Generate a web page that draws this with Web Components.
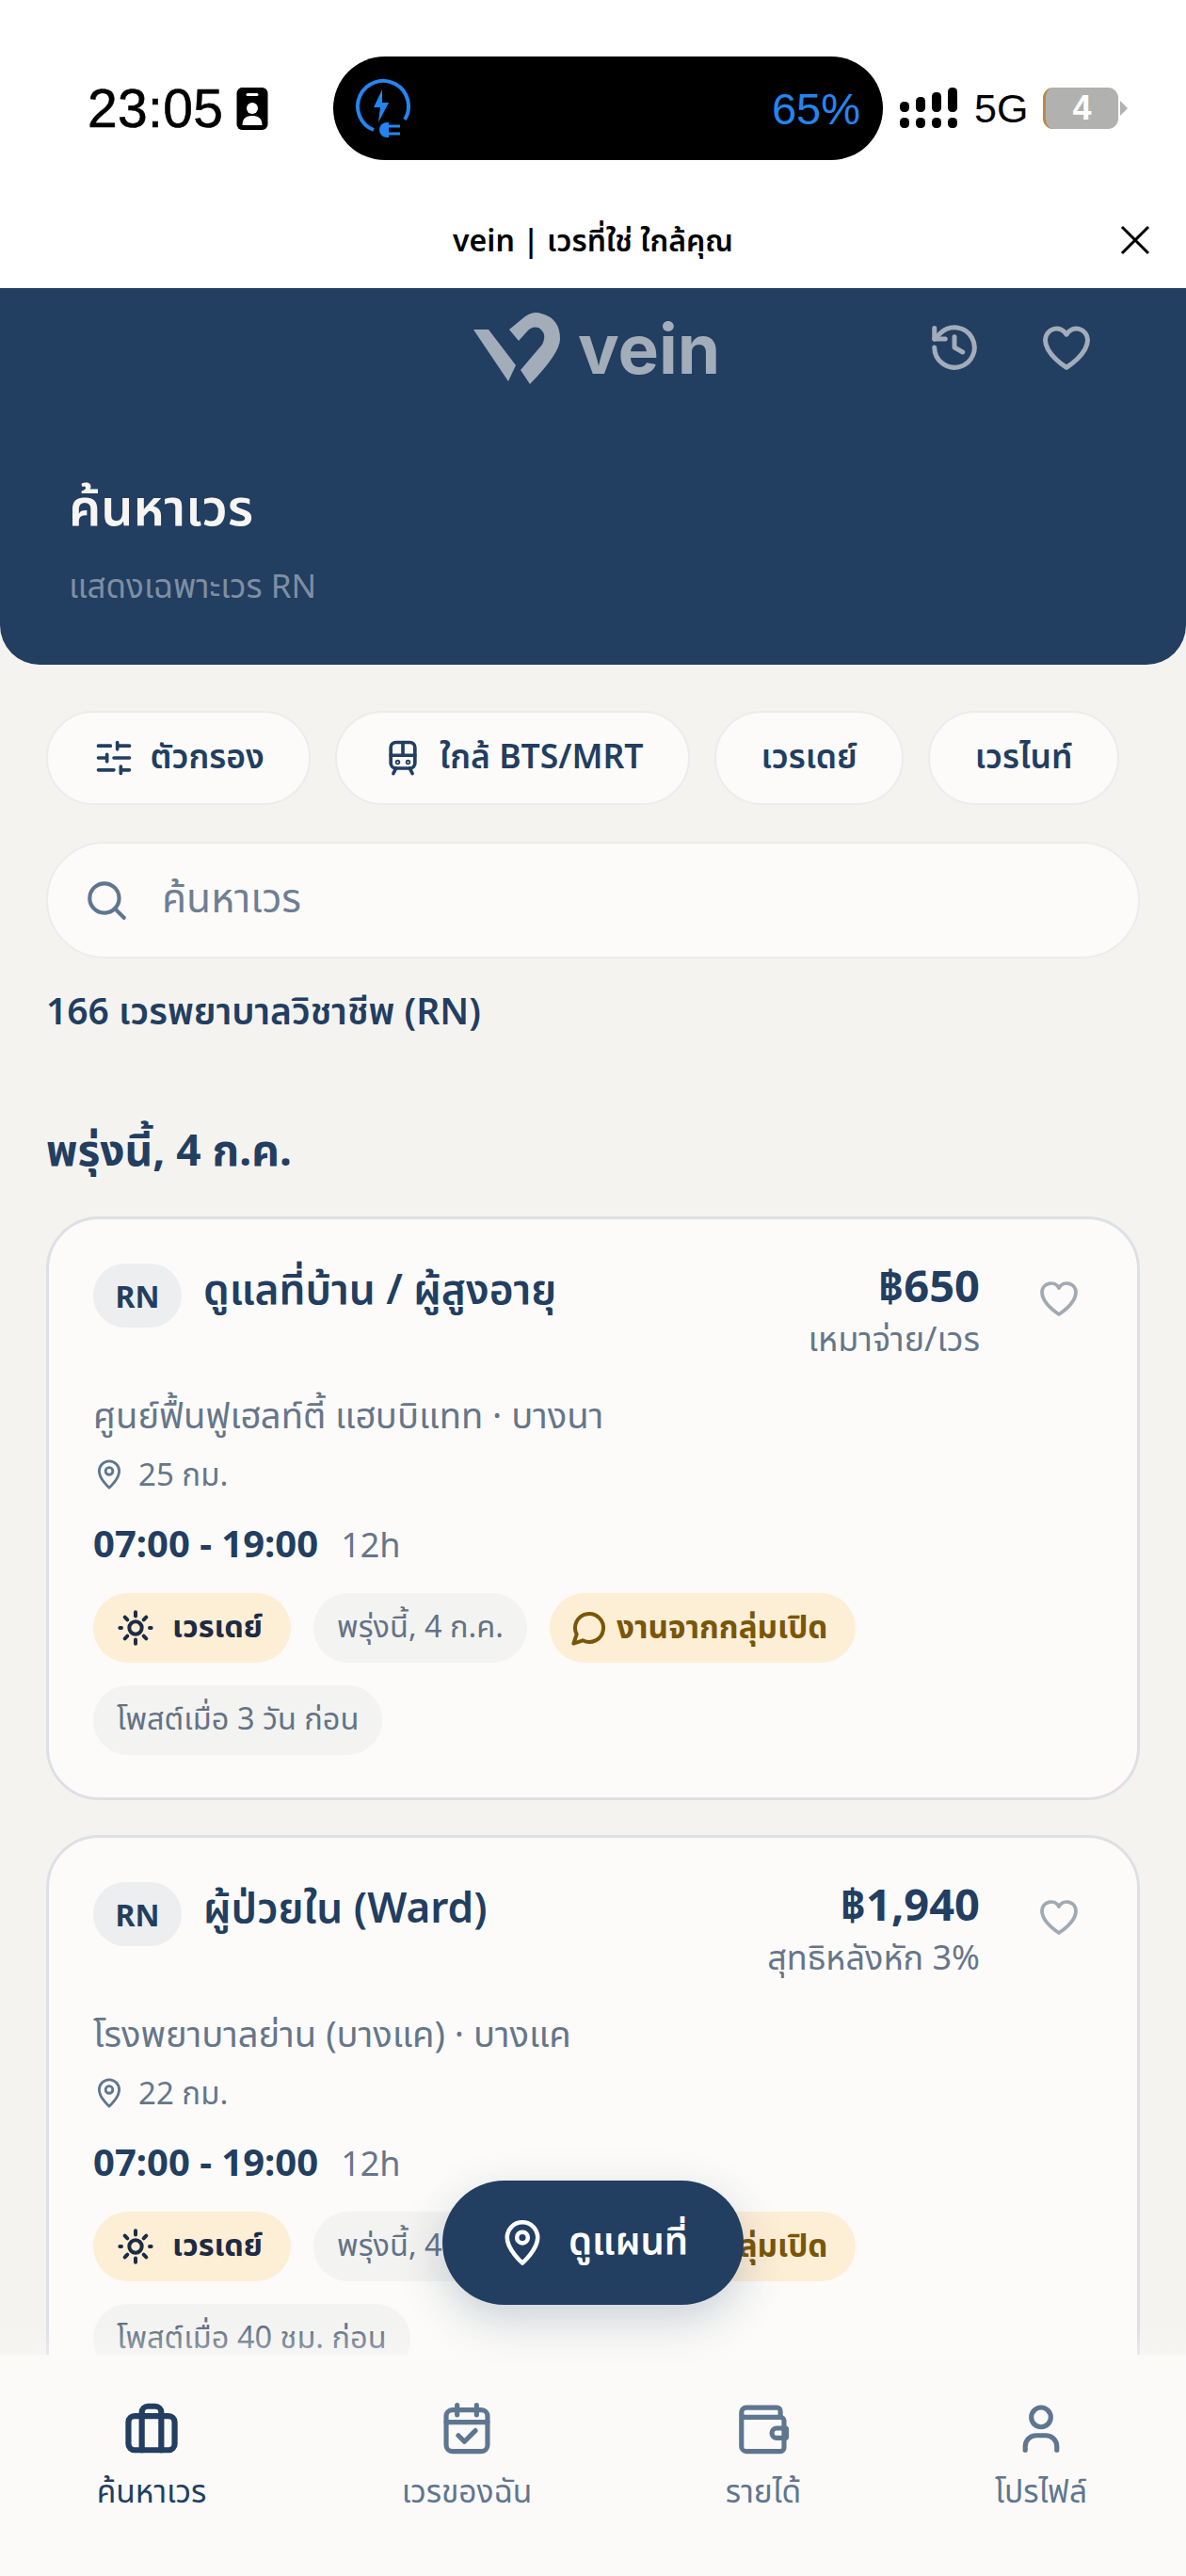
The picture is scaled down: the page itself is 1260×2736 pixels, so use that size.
<!DOCTYPE html>
<html lang="th"><head><meta charset="utf-8"><style>
html,body{margin:0;padding:0;background:#f4f3f0}
body{font-family:"Noto Sans","Noto Sans Thai","DejaVu Sans",sans-serif;width:1260px;height:2736px;overflow:hidden}
</style></head><body>
<vein-app></vein-app>
<script>
const I={
 heart:'<path d="M12 20.500S3 15 3 8.800A4.800 4.800 0 0 1 12 6.500 4.800 4.800 0 0 1 21 8.800C21 15 12 20.500 12 20.500Z"/>',
 history:'<path d="M3.500 12a8.500 8.500 0 1 0 2.600-6.100L3.500 8.400"/><path d="M3.500 3.800v4.600h4.600"/><path d="M12 7.500V12l3.500 2"/>',
 sliders:'<path d="M21 5h-7M10 5H3M21 12h-9M8 12H3M21 19h-5M12 19H3M14 3v4M8 10v4M16 17v4"/>',
 train:'<rect x="5" y="3" width="14" height="15" rx="3"/><path d="M5 10.500h14M12 3v7.500M8 18l-1.500 3M16 18l1.500 3"/><circle cx="9" cy="14.500" r=".5"/><circle cx="15" cy="14.500" r=".5"/>',
 search:'<circle cx="11" cy="11" r="7.500"/><path d="m16.500 16.500 4.500 4.500"/>',
 pin:'<path d="M12 22s7.500-6.600 7.500-12.500a7.500 7.500 0 0 0-15 0C4.500 15.400 12 22 12 22Z"/><circle cx="12" cy="9.500" r="2.700"/>',
 sun:'<circle cx="12" cy="12" r="4"/><path d="M12 2v2.500M12 19.500V22M2 12h1M21 12h1M5.200 5.200l1.600 1.600M17.200 17.200l1.600 1.600M5.200 18.800l1.600-1.600M17.200 6.800l1.600-1.600"/>',
 chat:'<path d="M7.900 20A9 9 0 1 0 4 16.100L2 22Z"/>',
 case:'<rect x="2.500" y="7" width="19" height="14" rx="2.500"/><path d="M8 21V5.500A2.500 2.500 0 0 1 10.500 3h3A2.500 2.500 0 0 1 16 5.500V21"/>',
 cal:'<rect x="3.500" y="4.500" width="17" height="17" rx="2.500"/><path d="M3.500 9.500h17M8 2.500v4M16 2.500v4M8.500 15l2.500 2.500 4.500-4.500"/>',
 wallet:'<path d="M19 7.500V5a1.500 1.500 0 0 0-1.500-1.500H5A2 2 0 0 0 3 5.500v14a2 2 0 0 0 2 2h14a1.500 1.500 0 0 0 1.500-1.500V9A1.500 1.500 0 0 0 19 7.500H4.500A1.500 1.500 0 0 1 3 6"/><path d="M21 12h-3.500a2 2 0 0 0 0 4H21a.5.5 0 0 0 .5-.5v-3a.5.5 0 0 0-.5-.5Z"/>',
 user:'<circle cx="12" cy="7.500" r="4"/><path d="M5.500 21v-1.500a4.500 4.500 0 0 1 4.500-4.500h4a4.500 4.500 0 0 1 4.500 4.500V21"/>'
};
function icon(n,s,w,c){return `<svg width="${s}" height="${s}" viewBox="0 0 24 24" fill="none" stroke="${c||'currentColor'}" stroke-width="${w}" stroke-linecap="round" stroke-linejoin="round" style="display:block;flex:none">${I[n]}</svg>`}
function def(name,css,html){customElements.define(name,class extends HTMLElement{
 connectedCallback(){if(this.shadowRoot)return;const r=this.attachShadow({mode:'open'});
 const a={};for(const x of this.attributes)a[x.name]=x.value;
 r.innerHTML=`<style>${css}</style>`+(typeof html==='function'?html(a):html)}})}

def('vein-status',`:host{display:flex;align-items:center;height:210px;box-sizing:border-box;background:#fff;color:#000;font-family:"Liberation Sans",sans-serif;padding:20px 0 0 93px;position:relative}
.time{font-size:57px;font-weight:400;-webkit-text-stroke:.6px #000;letter-spacing:.3px;width:158px;flex:none}
.badge{width:34px;height:45px;margin-right:69px;flex:none}
.island{width:584px;height:110px;background:#000;border-radius:55px;flex:none;display:flex;align-items:center;justify-content:space-between;box-sizing:border-box;padding:0 24px 0 19px;color:#2386f0;font-size:47px}
.sig{margin:0 0 0 18px;flex:none}
.g{font-size:43px;margin:0 0 0 17px;width:73px;flex:none}
.bat{flex:none;position:relative;width:90px;height:44px;display:flex}
.cell{width:80px;height:44px;border-radius:11px;background:#b1b2b0;border-left:3px solid #b98a4d;box-sizing:border-box;color:#fff;font-weight:700;font-size:36px;text-align:center;line-height:44px}
.tip{width:0;height:0;border-left:8px solid #b1b2b0;border-top:8px solid transparent;border-bottom:8px solid transparent;margin:14px 0 0 2px}
`,`<span class="time">23:05</span>
<svg class="badge" viewBox="0 0 33 45"><rect width="33" height="45" rx="6" fill="#000"/><rect x="10" y="6" width="13" height="3" rx="1.500" fill="#fff"/><circle cx="16.500" cy="22" r="6" fill="#fff"/><path d="M6 40c0-8 5-10 10.500-10S27 32 27 40Z" fill="#fff"/></svg>
<div class="island">
<svg width="64" height="64" viewBox="0 0 64 64"><path d="M57 44A27 27 0 1 0 24 55" fill="none" stroke="#2386f0" stroke-width="4"/><path d="M33 12 24 31h7l-2 16 11-21h-7Z" fill="#2386f0"/><path d="M40 47v16h-2a8 8 0 0 1 0-16Z" fill="#2386f0"/><path d="M40 51h12M40 59h12" stroke="#2386f0" stroke-width="3"/></svg>
<span>65%</span></div>
<svg class="sig" width="62" height="44" viewBox="0 0 62 44"><g fill="#000"><rect x="0" y="15" width="10" height="11" rx="4.500"/><rect x="0" y="32" width="10" height="11" rx="4.500"/><rect x="17" y="10" width="10" height="16" rx="4.500"/><rect x="17" y="32" width="10" height="11" rx="4.500"/><rect x="34" y="5" width="10" height="21" rx="4.500"/><rect x="34" y="32" width="10" height="11" rx="4.500"/><rect x="51" y="0" width="10" height="26" rx="4.500"/><rect x="51" y="32" width="10" height="11" rx="4.500"/></g></svg>
<span class="g">5G</span>
<div class="bat"><div class="cell">4</div><div class="tip"></div></div>`);

def('vein-title',`:host{display:block;position:relative;height:96px;background:#fff;color:#000}
.t{position:absolute;left:0;right:0;top:20px;text-align:center;font-weight:600;font-size:32px;line-height:50px}
svg{position:absolute;left:1189px;top:28px}`,`<div class="t">vein | เวรที่ใช่ ใกล้คุณ</div><svg width="34" height="34" viewBox="0 0 34 34"><path d="M3 3l28 28M31 3 3 31" stroke="#000" stroke-width="3"/></svg>`);

def('vein-hero',`:host{display:block;height:400px;background:#223e61;border-radius:0 0 42px 42px;box-sizing:border-box;padding:0 49px 0 73px;color:#fff}
.top{height:126px;position:relative}
.logo{position:absolute;left:427px;top:24px;display:flex;align-items:flex-start}
.word{color:#a2adb9;font-weight:700;font-size:73px;line-height:80px;margin:1px 0 0 14px;font-family:Inter,sans-serif}
.ic{position:absolute;top:33px}
h1{margin:75px 0 0;font-size:54px;font-weight:600;line-height:60px;color:#f6f5f1}
p{margin:32px 0 0;font-size:35px;line-height:46px;color:#7f8ea1}`,
`<div class="top">
<div class="logo"><svg width="100" height="80" viewBox="0 0 100 80"><path d="M3 20H19L48 58 40 75Z" fill="#a2adb9"/><path d="M41 20 58 6Q67 0 75 3 95 8 95 30 95 45 63 78L53 63 76 36Q82 24 72 18 65 16 60 22L51 32Z" fill="#a2adb9"/></svg><span class="word">vein</span></div>
<span class="ic" style="left:911px">${icon('history',60,2,'#a2adb9')}</span>
<span class="ic" style="left:1030px">${icon('heart',60,2,'#a2adb9')}</span>
</div>
<h1>ค้นหาเวร</h1><p>แสดงเฉพาะเวร RN</p>`);

def('vein-chip',`:host{display:flex;align-items:center;gap:17px;height:100px;box-sizing:border-box;padding:0 47.500px;background:#fcfbf9;border:2.500px solid #ebecee;border-radius:50px;color:#223e61;font-size:35.500px;font-weight:600;flex:none}`,
a=>`${a.icon?icon(a.icon,44,2):''}<slot></slot>`);

def('vein-search',`:host{display:flex;align-items:center;gap:34px;height:124px;box-sizing:border-box;padding:0 37px;background:#fcfbf9;border:2.500px solid #ebecee;border-radius:62px;color:#6e7f93;font-size:42.500px}`,
`${icon('search',50,2,'#5f7690')}<span>ค้นหาเวร</span>`);

def('vein-tag',`:host{display:inline-flex;align-items:center;gap:14px;height:74px;box-sizing:border-box;padding:0 25px;border-radius:37px;font-size:32.500px;white-space:nowrap;background:#f3f3f1;color:#637286}
:host([kind=day]){background:#fdeed6;color:#1d2b44;font-weight:700;padding:0 30px 0 25px;gap:19px}
:host([kind=open]){background:#fdeed6;color:#7a5608;font-weight:700;padding:0 30px 0 22px;gap:9px;font-size:33.300px}`,
a=>`${a.icon?icon(a.icon,40,2.400):''}<slot></slot>`);

def('vein-card',`:host{display:block;background:#fcfbf9;border:3px solid #dde0e4;border-radius:56px;box-sizing:border-box;padding:46px 47px 46px 47px;color:#223e61;height:620px;flex:none}
.head{display:flex;align-items:flex-start}
.rn{width:94px;height:68px;border-radius:34px;background:#eceef0;display:flex;align-items:center;justify-content:center;font-size:32px;font-weight:700;margin-top:1px;flex:none}
.title{margin-left:23px;font-size:44.200px;font-weight:600;line-height:60px;flex:1;margin-top:-3px}
.pay{text-align:right}
.price{font-size:47px;font-weight:700;line-height:54px;margin-top:-3.500px}
.sub{font-size:36px;line-height:48px;color:#66768a;margin-top:6.500px}
.hr{width:60px;margin:14px 0 0 60px;flex:none;color:#a1aab4}
.place{margin-top:29px;font-size:38.200px;line-height:54px;color:#66768a}
.dist{display:flex;align-items:center;gap:14px;font-size:33px;line-height:48px;color:#66768a;margin-top:13px}
.time{margin-top:21px;font-size:40px;line-height:56px;font-weight:700;display:flex;align-items:baseline;gap:24px}
.time small{font-size:36px;font-weight:400;color:#66768a}
.tags{margin-top:23px;display:flex;flex-wrap:wrap;gap:24px}
`,a=>`<div class="head"><div class="rn">RN</div><div class="title">${a.title}</div><div class="pay"><div class="price">${a.price}</div><div class="sub">${a.sub}</div></div><div class="hr">${icon('heart',48,1.900,'#a1aab4')}</div></div>
<div class="place">${a.place}</div>
<div class="dist">${icon('pin',34,2,'#5f7690')}<span>${a.dist}</span></div>
<div class="time">07:00 - 19:00 <small>12h</small></div>
<div class="tags"><vein-tag kind="day" icon="sun">เวรเดย์</vein-tag><vein-tag>พรุ่งนี้, 4 ก.ค.</vein-tag><vein-tag kind="open" icon="chat">งานจากกลุ่มเปิด</vein-tag><vein-tag>${a.posted}</vein-tag></div>`);

def('vein-fab',`:host{position:absolute;left:470px;top:2316px;width:320px;height:132px;border-radius:66px;background:#223e61;color:#fff;display:flex;align-items:center;justify-content:center;gap:23px;font-size:40px;font-weight:600;box-shadow:0 16px 48px rgba(34,62,97,.22);z-index:2}`,
`${icon('pin',52,2.100,'#fff')}<span>ดูแผนที่</span>`);

def('vein-nav-item',`:host{display:flex;flex-direction:column;align-items:center;width:240px;color:#5f7690;font-size:33.500px;gap:12px}
:host([active]){color:#223e61}`,
a=>`${icon(a.icon,62,a.active!==undefined?2.400:2)}<span><slot></slot></span>`);

def('vein-nav',`:host{display:block;height:235px;box-sizing:border-box;padding:47px 0 0 41px;background:#fbfaf8;flex:none;position:relative;z-index:1}
:host::before{content:"";position:absolute;left:0;right:0;top:-30px;height:30px;background:linear-gradient(rgba(251,250,248,0),rgba(251,250,248,.35))}
.row{display:flex;gap:0}
::slotted(*:nth-child(2)){margin-left:95px}
::slotted(*:nth-child(3)){margin-left:75px}
::slotted(*:nth-child(4)){margin-left:55px}`,`<div class="row"><slot></slot></div>`);

def('vein-app',`:host{display:flex;flex-direction:column;height:2736px;width:1260px;position:relative;overflow:hidden;background:#f4f3f0}
.scroll{flex:1;overflow:hidden;min-height:0}
.body{padding:49px 49px 0}
.chips{display:flex;gap:26px}
.count{font-size:39px;font-weight:600;color:#223e61;line-height:50px;margin-top:30px}
h2{margin:84px 0 0;font-size:46px;font-weight:700;line-height:76px;color:#223e61}
.cards{display:flex;flex-direction:column;gap:37px;margin-top:34px}
vein-search{margin-top:39px}
`,`<div class="scroll"><vein-status></vein-status><vein-title></vein-title><vein-hero></vein-hero>
<div class="body"><div class="chips"><vein-chip icon="sliders">ตัวกรอง</vein-chip><vein-chip icon="train">ใกล้ BTS/MRT</vein-chip><vein-chip>เวรเดย์</vein-chip><vein-chip>เวรไนท์</vein-chip></div>
<vein-search></vein-search>
<div class="count">166 เวรพยาบาลวิชาชีพ (RN)</div>
<h2>พรุ่งนี้, 4 ก.ค.</h2>
<div class="cards">
<vein-card title="ดูแลที่บ้าน / ผู้สูงอายุ" price="฿650" sub="เหมาจ่าย/เวร" place="ศูนย์ฟื้นฟูเฮลท์ตี้ แฮบบิแทท · บางนา" dist="25 กม." posted="โพสต์เมื่อ 3 วัน ก่อน"></vein-card>
<vein-card title="ผู้ป่วยใน (Ward)" price="฿1,940" sub="สุทธิหลังหัก 3%" place="โรงพยาบาลย่าน (บางแค) · บางแค" dist="22 กม." posted="โพสต์เมื่อ 40 ชม. ก่อน"></vein-card>
</div></div></div>
<vein-fab></vein-fab>
<vein-nav><vein-nav-item icon="case" active>ค้นหาเวร</vein-nav-item><vein-nav-item icon="cal">เวรของฉัน</vein-nav-item><vein-nav-item icon="wallet">รายได้</vein-nav-item><vein-nav-item icon="user">โปรไฟล์</vein-nav-item></vein-nav>`);
</script></body></html>
